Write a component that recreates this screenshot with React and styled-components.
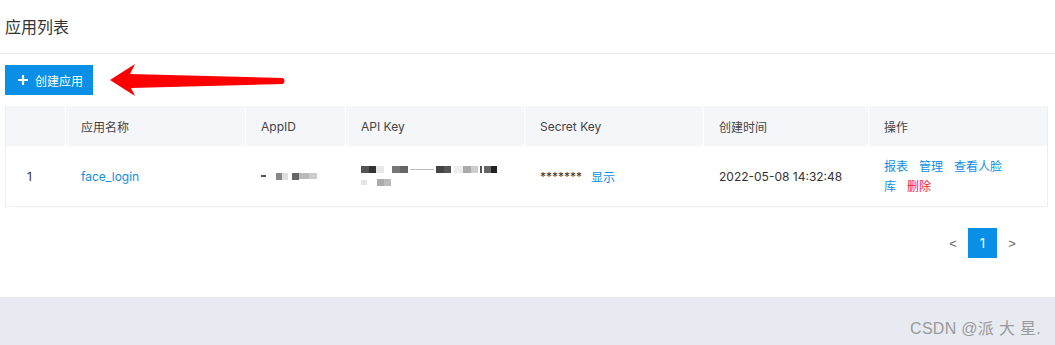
import React from "react";
import styled, { createGlobalStyle } from "styled-components";

const Global = createGlobalStyle`
  html, body { margin: 0; padding: 0; background: #fff; }
  body { font-family: "Inter", "Noto Sans CJK SC", sans-serif; color: #333; }
`;

const Page = styled.div`
  position: relative;
  width: 1055px;
  height: 345px;
  display: flex;
  flex-direction: column;
  overflow: hidden;
`;

const TitleBar = styled.div`
  height: 52px;
  border-bottom: 1px solid #e8e8e8;
  display: flex;
  align-items: center;
  padding-left: 5px;
  padding-bottom: 1px;
  box-sizing: content-box;
  font-size: 16px;
  color: #333;
  font-family: "Noto Sans CJK SC", sans-serif;
`;

const Content = styled.div`
  padding: 11px 7px 0 5px;
  display: flex;
  flex-direction: column;
  flex: 1;
`;

const PrimaryButton = styled.button`
  width: 88px;
  height: 30px;
  border: none;
  background: #0a8fe6;
  color: #fff;
  display: flex;
  align-items: center;
  gap: 6px;
  padding: 0 0 0 12px;
  font-size: 12px;
  font-family: "Noto Sans CJK SC", sans-serif;
  cursor: pointer;
`;

const Grid = styled.div`
  margin-top: 11px;
  display: grid;
  grid-template-columns: 59px 180px 100px 179px 179px 165px 179px;
  border: 1px solid #eceef4;
  border-top: none;
  width: 1043px;
  box-sizing: border-box;
`;

const HeadCell = styled.div`
  background: #f5f6fa;
  height: 40px;
  display: flex;
  align-items: center;
  padding-left: ${(p) => (p.$first ? "21px" : "15px")};
  border-left: ${(p) => (p.$first ? "none" : "1px solid #fff")};
  font-size: 12px;
  color: #444;
  box-sizing: border-box;
`;

const Cell = styled.div`
  height: 60px;
  display: flex;
  align-items: center;
  padding-left: ${(p) => (p.$first ? "21px" : "16px")};
  padding-right: 8px;
  font-size: 12px;
  color: #333;
  box-sizing: border-box;
`;

const Link = styled.span`
  color: ${(p) => (p.$danger ? "#f5222d" : "#0f8fe6")};
  cursor: pointer;
  margin-right: ${(p) => (p.$gap ? "11px" : "0")};
`;

const Actions = styled.div`
  line-height: 20px;
  font-size: 12px;
  width: 122px;
  font-family: "Noto Sans CJK SC", sans-serif;
`;

const Stars = styled.span`
  margin-right: 9px;
  font-size: 12px;
  color: #333;
`;

const Blur = styled.div`
  display: flex;
  flex-direction: column;
  gap: 6px;
`;

const BlurLine = styled.div`
  display: flex;
  align-items: center;
  height: 7px;
`;

const Pix = styled.span`
  display: inline-block;
  width: ${(p) => p.$w}px;
  height: ${(p) => p.$h || 7}px;
  background: ${(p) => p.$c};
  margin-right: ${(p) => p.$m || 0}px;
`;

const Pager = styled.div`
  margin-top: 21px;
  align-self: flex-end;
  margin-right: 21px;
  display: flex;
  align-items: center;
`;

const PageArrow = styled.span`
  width: 30px;
  text-align: center;
  font-size: 13px;
  color: #666;
  font-family: "Liberation Sans", sans-serif;
`;

const PageNum = styled.span`
  width: 29px;
  height: 30px;
  background: #0a8fe6;
  color: #fff;
  display: flex;
  align-items: center;
  justify-content: center;
  font-size: 13px;
`;

const Footer = styled.div`
  height: 48px;
  background: #e7eaf0;
  display: flex;
  align-items: center;
  justify-content: flex-end;
  padding-right: 14px;
`;

const Watermark = styled.span`
  font-size: 16px;
  color: #9a9a9a;
  font-family: "Liberation Sans", "Noto Sans CJK SC", sans-serif;
  letter-spacing: 0.3px;
  margin-top: 12px;
`;

const ArrowSvg = styled.svg`
  position: absolute;
  left: 105px;
  top: 60px;
`;

const headers = ["", "应用名称", "AppID", "API Key", "Secret Key", "创建时间", "操作"];

export default function App() {
  return (
    <>
      <Global />
      <Page>
        <TitleBar>应用列表</TitleBar>
        <Content>
          <PrimaryButton>
            <svg width="12" height="12" viewBox="0 0 12 12">
              <path d="M6 1v10M1 6h10" stroke="#fff" strokeWidth="2.2" />
            </svg>
            创建应用
          </PrimaryButton>
          <Grid>
            {headers.map((h, i) => (
              <HeadCell key={i} $first={i === 0}>{h}</HeadCell>
            ))}
            <Cell $first>1</Cell>
            <Cell><Link>face_login</Link></Cell>
            <Cell>
              <BlurLine>
                <Pix $w={5} $h={2} $c="#555" $m={10} />
                <Pix $w={6} $c="#888" />
                <Pix $w={6} $c="#ddd" $m={4} />
                <Pix $w={7} $c="#666" />
                <Pix $w={10} $c="#bbb" $h={6} />
                <Pix $w={8} $c="#ccc" $h={6} />
              </BlurLine>
            </Cell>
            <Cell>
              <Blur>
                <BlurLine>
                  <Pix $w={8} $c="#555" />
                  <Pix $w={7} $c="#333" />
                  <Pix $w={8} $c="#e8e8e8" $m={8} />
                  <Pix $w={8} $c="#777" />
                  <Pix $w={8} $c="#666" $m={2} />
                  <Pix $w={24} $h={1} $c="#bbb" $m={2} />
                  <Pix $w={8} $c="#444" />
                  <Pix $w={7} $c="#555" $m={3} />
                  <Pix $w={9} $c="#eee" />
                  <Pix $w={8} $c="#aaa" />
                  <Pix $w={7} $c="#ccc" $m={2} />
                  <Pix $w={2} $c="#555" $m={2} />
                  <Pix $w={7} $c="#666" />
                  <Pix $w={6} $c="#222" />
                </BlurLine>
                <BlurLine>
                  <Pix $w={6} $h={5} $c="#e5e5e5" $m={10} />
                  <Pix $w={7} $c="#aaa" />
                  <Pix $w={7} $c="#bbb" />
                </BlurLine>
              </Blur>
            </Cell>
            <Cell>
              <Stars>*******</Stars>
              <Link>显示</Link>
            </Cell>
            <Cell>2022-05-08 14:32:48</Cell>
            <Cell>
              <Actions>
                <Link $gap>报表</Link>
                <Link $gap>管理</Link>
                <Link $gap>查看人脸库</Link>
                <Link $danger>删除</Link>
              </Actions>
            </Cell>
          </Grid>
          <Pager>
            <PageArrow>&lt;</PageArrow>
            <PageNum>1</PageNum>
            <PageArrow>&gt;</PageArrow>
          </Pager>
        </Content>
        <Footer>
          <Watermark>CSDN @派 大 星.</Watermark>
        </Footer>
        <ArrowSvg width="185" height="40" viewBox="0 0 185 40">
          <path
            d="M5 20 L30 4 L25 14 L178 18 Q181 21 178 24 L26 28 L30 36 Z"
            fill="#ff0000"
          />
        </ArrowSvg>
      </Page>
    </>
  );
}
